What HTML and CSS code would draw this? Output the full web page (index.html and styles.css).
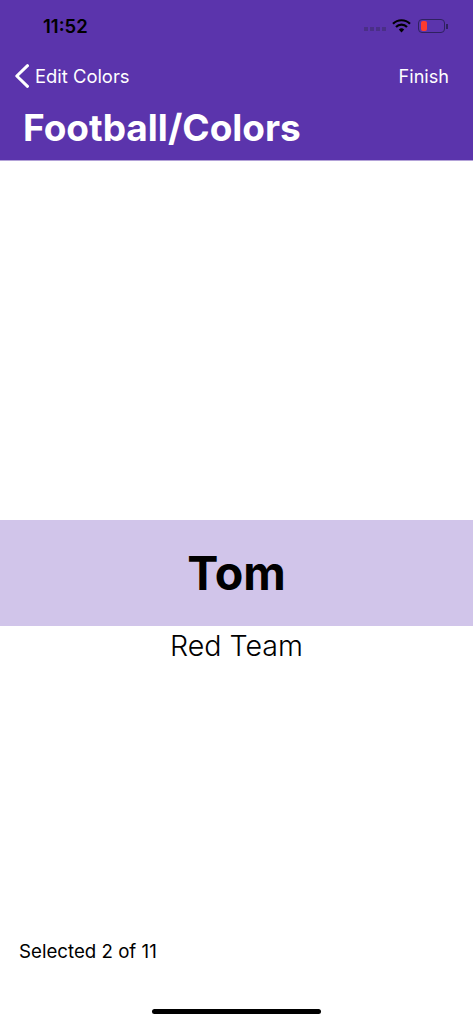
FILE: index.html
```html
<!DOCTYPE html>
<html>
<head>
    <title>Football/Colors</title>
    <link rel="stylesheet" href="styles.css">
</head>
<body>
    <div class="screen">
        <div class="header">
            <div class="status">
                <span class="status__time">11:52</span>
                <div class="status__icons">
                    <div class="status__dots"><i></i><i></i><i></i><i></i></div>
                    <svg class="status__wifi" width="19" height="14" viewBox="0 0 19 14">
                        <path d="M1 4.8 A12 12 0 0 1 18 4.8" fill="none" stroke="#000" stroke-width="2.2"/>
                        <path d="M4 8 A7.6 7.6 0 0 1 15 8" fill="none" stroke="#000" stroke-width="2.2"/>
                        <path d="M6.8 10.6 A4 4 0 0 1 12.2 10.6 L9.5 13.5 Z" fill="#000"/>
                    </svg>
                    <div class="battery">
                        <div class="battery__body"><div class="battery__level"></div></div>
                        <div class="battery__cap"></div>
                    </div>
                </div>
            </div>
            <div class="nav">
                <a class="nav__back">
                    <svg width="15" height="24" viewBox="0 0 15 24">
                        <path d="M13.5 1.7 L2.8 12 L13.5 22.3" fill="none" stroke="#fff" stroke-width="3" stroke-linecap="round" stroke-linejoin="round"/>
                    </svg>
                    <span>Edit Colors</span>
                </a>
                <a class="nav__finish">Finish</a>
            </div>
            <h1 class="header__title">Football/Colors</h1>
        </div>
        <div class="main">
            <div class="player">Tom</div>
            <div class="team">Red Team</div>
        </div>
        <div class="footer">Selected 2 of 11</div>
        <div class="home-bar"></div>
    </div>
</body>
</html>
```

FILE: styles.css
```css
* {
    margin: 0;
    padding: 0;
    box-sizing: border-box;
}
html, body {
    height: 100%;
    overflow: hidden;
}
body {
    font-family: Inter, "Liberation Sans", sans-serif;
    background: #fff;
    color: #000;
}
.screen {
    display: flex;
    flex-direction: column;
    height: 1024px;
}
.header {
    height: 161px;
    background: #5b34ac;
    color: #fff;
    border-bottom: 1px solid #b3a2d8;
}
.status {
    display: flex;
    justify-content: space-between;
    align-items: center;
    height: 52px;
    padding: 0 25px 0 43px;
}
.status__time {
    font-size: 18.5px;
    font-weight: 600;
    color: #000;
}
.status__icons {
    display: flex;
    align-items: center;
}
.status__dots {
    display: flex;
    gap: 2px;
    margin-right: 6px;
    margin-top: 5px;
}
.status__dots i {
    width: 4px;
    height: 4px;
    background: #4a2f87;
}
.status__wifi {
    margin-right: 7px;
}
.battery {
    display: flex;
    align-items: center;
}
.battery__body {
    width: 27px;
    height: 14px;
    padding: 1px 2px;
    border: 1px solid #2f2160;
    border-radius: 4px;
}
.battery__level {
    width: 6px;
    height: 100%;
    background: #ff3b30;
    border-radius: 2px;
}
.battery__cap {
    width: 2px;
    height: 5px;
    margin-left: 1px;
    background: #2f2160;
}
.nav {
    display: flex;
    justify-content: space-between;
    align-items: center;
    height: 48px;
    padding: 0 24px 0 14px;
}
.nav__back {
    display: flex;
    align-items: center;
    gap: 6px;
    font-size: 18.4px;
}
.nav__finish {
    font-size: 18.1px;
}
.header__title {
    padding-left: 23px;
    font-size: 37px;
    font-weight: 700;
    line-height: 42px;
    margin-top: 7px;
}
.main {
    flex: 1;
    padding-top: 359px;
}
.player {
    height: 106px;
    background: #d1c5ea;
    text-align: center;
    font-size: 46.6px;
    font-weight: 700;
    line-height: 106px;
}
.team {
    text-align: center;
    font-size: 28.6px;
    font-weight: 300;
    line-height: 40px;
}
.footer {
    padding: 0 19px;
    font-size: 18.7px;
    line-height: 22px;
    margin-bottom: 61px;
}
.home-bar {
    position: absolute;
    left: 152px;
    top: 1009px;
    width: 169px;
    height: 5px;
    border-radius: 3px;
    background: #000;
}
```
